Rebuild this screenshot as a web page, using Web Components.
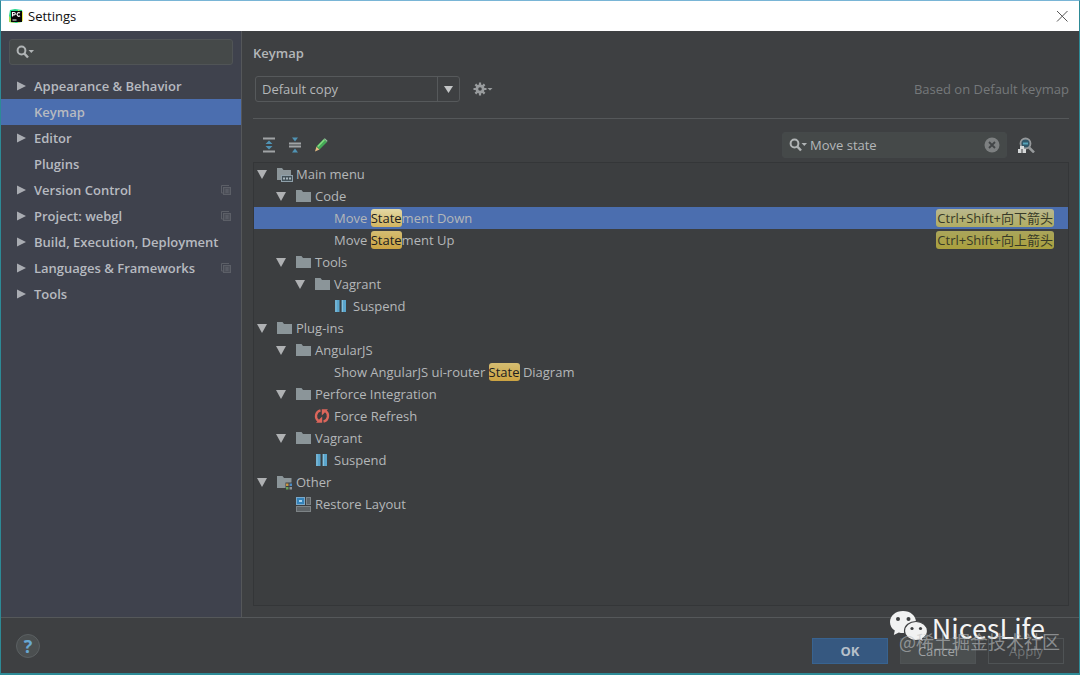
<!DOCTYPE html>
<html lang="en">
<head>
<meta charset="utf-8">
<title>Settings</title>
<style>
  html, body {
    margin: 0;
    height: 100%;
  }

  body {
    font-family: "Open Sans", "Noto Sans CJK SC", sans-serif;
    font-size: 13px;
    line-height: 22px;
    color: #b4b7b9;
    background: #3e4042;
  }
</style>
</head>
<body>
<settings-dialog>
  <title-bar slot="title">Settings</title-bar>

  <settings-nav slot="nav">
    <nav-item expandable>Appearance &amp; Behavior</nav-item>
    <nav-item selected>Keymap</nav-item>
    <nav-item expandable>Editor</nav-item>
    <nav-item>Plugins</nav-item>
    <nav-item expandable project>Version Control</nav-item>
    <nav-item expandable project>Project: webgl</nav-item>
    <nav-item expandable>Build, Execution, Deployment</nav-item>
    <nav-item expandable project>Languages &amp; Frameworks</nav-item>
    <nav-item expandable>Tools</nav-item>
  </settings-nav>

  <keymap-panel>
    <tree-row level="0" open icon="menu">Main menu</tree-row>
    <tree-row level="1" open icon="folder">Code</tree-row>
    <tree-row level="2" selected shortcut="Ctrl+Shift+向下箭头" match="State">Move Statement Down</tree-row>
    <tree-row level="2" shortcut="Ctrl+Shift+向上箭头" match="State">Move Statement Up</tree-row>
    <tree-row level="1" open icon="folder">Tools</tree-row>
    <tree-row level="2" open icon="folder">Vagrant</tree-row>
    <tree-row level="3" icon="pause">Suspend</tree-row>
    <tree-row level="0" open icon="folder">Plug-ins</tree-row>
    <tree-row level="1" open icon="folder">AngularJS</tree-row>
    <tree-row level="2" match="State">Show AngularJS ui-router State Diagram</tree-row>
    <tree-row level="1" open icon="folder">Perforce Integration</tree-row>
    <tree-row level="2" icon="refresh">Force Refresh</tree-row>
    <tree-row level="1" open icon="folder">Vagrant</tree-row>
    <tree-row level="2" icon="pause">Suspend</tree-row>
    <tree-row level="0" open icon="other">Other</tree-row>
    <tree-row level="1" icon="layout">Restore Layout</tree-row>
  </keymap-panel>

  <dialog-footer slot="footer"></dialog-footer>
  <page-watermark slot="watermark"></page-watermark>
</settings-dialog>

<script>
  const icons = {
    logo: `<path d="M2 2l5-1 7 1 1 6-1 6-6 1-6-1-1-6z" fill="#21d789"/><path d="M10 2l5 2v9l-5 2z" fill="#e9ed4c"/><path d="M1 8v6l6 1z" fill="#a5dc4f"/><rect x="3" y="3" width="11" height="11" fill="#070707"/><path d="M4.500 8.500V4.500h1.600a1.200 1.200 0 0 1 0 2.400H4.500M12 5a1.800 1.800 0 1 0 0 2.800" fill="none" stroke="#fff" stroke-width="1.200"/><path d="M4.500 12h4" stroke="#fff"/>`,
    close: `<path d="M3 3l10.500 10.500M13.500 3L3 13.500" stroke="#555" stroke-width="1"/>`,
    right: `<path d="M4 3.500v9l9-4.500z" fill="#a9acb2"/>`,
    down: `<path d="M3 4h10l-5 9z" fill="#afb1b3"/>`,
    caret: `<path d="M2 3h9l-4.500 7z" fill="#c3c5c6"/>`,
    search: `<circle cx="5.500" cy="6.500" r="3.900" fill="none" stroke="#b0b4b5" stroke-width="2"/><path d="M8.300 9.500l3.700 4" stroke="#b0b4b5" stroke-width="2.500"/><path d="M12.500 6H18l-2.700 3z" fill="#b0b4b5"/>`,
    project: `<path d="M3.500 11V3.500H11M3.500 11h2" fill="none" stroke="#5c5f67"/><rect x="5.500" y="5.500" width="7" height="7" fill="#4c4f58" stroke="#5c5f67"/><path d="M7.500 8h3M7.500 10h3" stroke="#646870"/>`,
    gear: `<path d="M8 1.500v13M1.500 8h13M3.400 3.400l9.200 9.200M12.600 3.400l-9.200 9.200" stroke="#999c9e" stroke-width="2.200"/><circle cx="8" cy="8" r="4.500" fill="#999c9e"/><circle cx="8" cy="8" r="1.800" fill="#3e4042"/><path d="M15.500 7h5l-2.500 2.500z" fill="#999c9e"/>`,
    expand: `<path d="M2 1.500h12M2 14.500h12" stroke="#a0a3a5" stroke-width="2"/><path d="M4.500 7L8 3.500 11.500 7zM4.500 9L8 12.500 11.500 9z" fill="#5093b4"/>`,
    collapse: `<path d="M2 6.500h12M2 9.500h12" stroke="#a0a3a5" stroke-width="2"/><path d="M5 .5h6L8 4.500zM5 15.500h6L8 11.500z" fill="#5093b4"/>`,
    edit: `<path d="M2 14.500l1.500-5L6.500 12.500z" fill="#e5bc83"/><path d="M3.500 9.500L10.800 2l3.200 3-7.500 7.500z" fill="#45a957"/><path d="M4.800 9.500l6.500-6.700" stroke="#85dc80" stroke-width="1.500"/><path d="M10.800 2l1-.7 2.700 2.500-.5 1.200z" fill="#93c39b"/>`,
    clear: `<circle cx="8" cy="8" r="7.500" fill="#7d8081"/><path d="M5 5l6 6M11 5l-6 6" stroke="#424547" stroke-width="1.800"/>`,
    shortcut: `<circle cx="8.500" cy="6.500" r="5" fill="#315668" stroke="#96999b" stroke-width="1.800"/><path d="M6 6.500h5" stroke="#55a3b9" stroke-width="2"/><path d="M12 10.500l5 5" stroke="#96999b" stroke-width="2.500"/><path d="M3 9h4v3h2v4H1v-4h2z" fill="#d5d7d8"/><path d="M5 12v4" stroke="#3e4042"/>`,
    folder: `<path d="M1 2h5.500L8 4h8v10H1z" fill="#8b9599"/>`,
    menu: `<path d="M1 2h5l1.500 2H15v5H5v5H1z" fill="#8b9599"/><rect x="5.500" y="9.500" width="11" height="6" fill="#435158" stroke="#8fa0aa"/><path d="M7 12.500h2M10 12.500h2M13 12.500h2" stroke="#a8b6bd" stroke-width="2"/>`,
    other: `<path d="M1 2h5.500L8 4h7.500v4.500h-6V14H1z" fill="#8b9599"/><path d="M10 9.500h2.500V12H10z" fill="#c99444"/><path d="M13.500 9.500H16V12h-2.500z" fill="#4b8ac3"/><path d="M10 13h2.500v2.500H10z" fill="#67a15b"/><path d="M13.500 13H16v2.500h-2.500z" fill="#8f9397"/>`,
    pause: `<path d="M2 2h4.500v12H2zM8.500 2H13v12H8.500z" fill="#5aa5cc"/><path d="M3 2v12M9.500 2v12" stroke="#8ac0da"/>`,
    refresh: `<path d="M6.500 2.300A6 6 0 0 0 4.500 13M9.500 13.700A6 6 0 0 0 11.500 3" fill="none" stroke="#dc665b" stroke-width="2.300"/><path d="M2 14.800h6.200V8.500zM14 1.200H7.800v6.300z" fill="#dc665b"/>`,
    layout: `<rect x="1.500" y="1.500" width="8" height="7" fill="#3482b9" stroke="#7aa8c9"/><path d="M4 4h3v2H4z" fill="#a6d2ed"/><rect x="11.500" y="1.500" width="4" height="7" fill="#5f6467" stroke="#7d8386"/><rect x="1.500" y="10.500" width="14" height="5" fill="#5f6467" stroke="#7d8386"/>`,
    wechat: `<path d="M14 1C6.500 1 1 5.800 1 12c0 3.600 1.800 6.600 4.800 8.500L4.800 25l5-2.600c1.500.4 2.700.5 4.200.5 7.500 0 13-4.800 13-10.900S21.500 1 14 1z" fill="#f1f2f2"/><path d="M27 11.500c-6.500 0-11.500 4.200-11.500 9.500s5 9.500 11.500 9.500c1.300 0 2.500-.2 3.500-.5l4.200 2.300-1-3.800c3-1.700 4.800-4.400 4.800-7.500 0-5.300-5-9.500-11.500-9.500z" fill="#f1f2f2" stroke="#3e4042" stroke-width="1.200"/><g fill="#3e4042"><circle cx="9" cy="9" r="2"/><circle cx="19.500" cy="9" r="2"/><circle cx="23" cy="18.500" r="1.600"/><circle cx="31.500" cy="18.500" r="1.600"/></g>`
  };

  class SvgIcon extends HTMLElement {
    constructor() {
      super();
      this.attachShadow({ mode: 'open' });
    }

    connectedCallback() {
      const width = this.getAttribute('width') || 16;
      const height = this.getAttribute('height') || 16;
      this.shadowRoot.innerHTML = `
        <style>
          :host { display: block; flex: none; }
          svg { display: block; }
        </style>
        <svg width="${width}" height="${height}" viewBox="0 0 ${width} ${height}" aria-hidden="true">${icons[this.getAttribute('name')] || ''}</svg>
      `;
    }
  }

  class SettingsDialog extends HTMLElement {
    constructor() {
      super();
      this.attachShadow({ mode: 'open' });
      this.shadowRoot.innerHTML = `
        <style>
          :host {
            display: flex;
            flex-direction: column;
            position: relative;
            box-sizing: border-box;
            min-height: 100vh;
            border: 1px solid #2d8a96;
            border-top-color: #79b5d6;
            border-bottom-width: 2px;
          }

          #body {
            flex: 1;
            display: grid;
            grid-template-columns: 241px 1fr;
          }
        </style>
        <slot name="title"></slot>
        <div id="body">
          <slot name="nav"></slot>
          <slot></slot>
        </div>
        <slot name="footer"></slot>
        <slot name="watermark"></slot>
      `;
    }
  }

  class TitleBar extends HTMLElement {
    constructor() {
      super();
      this.attachShadow({ mode: 'open' });
      this.shadowRoot.innerHTML = `
        <style>
          :host {
            display: flex;
            align-items: center;
            gap: 4px;
            height: 30px;
            padding: 0 9px 0 7px;
            background: #fff;
            color: #111;
          }

          #title { flex: 1; }

          button {
            padding: 0;
            border: 0;
            background: none;
          }
        </style>
        <svg-icon name="logo"></svg-icon>
        <span id="title"><slot></slot></span>
        <button aria-label="Close"><svg-icon name="close"></svg-icon></button>
      `;
    }
  }

  class SearchField extends HTMLElement {
    constructor() {
      super();
      this.attachShadow({ mode: 'open' });
    }

    connectedCallback() {
      const value = this.getAttribute('value') || '';
      this.shadowRoot.innerHTML = `
        <style>
          :host {
            display: flex;
            align-items: center;
            box-sizing: border-box;
            height: 26px;
            padding: 0 6px;
            border: 1px solid #505456;
            border-radius: 3px;
            background: #454949;
          }

          input {
            flex: 1;
            min-width: 0;
            padding: 0 2px;
            border: 0;
            outline: 0;
            background: none;
            font: inherit;
            color: #b4b7b9;
          }

          button {
            padding: 0;
            border: 0;
            background: none;
          }
        </style>
        <svg-icon name="search" width="19"></svg-icon>
        <input type="text" aria-label="${this.getAttribute('label')}" value="${value}">
        ${value ? '<button aria-label="Clear"><svg-icon name="clear"></svg-icon></button>' : ''}
      `;
    }
  }

  class SettingsNav extends HTMLElement {
    constructor() {
      super();
      this.attachShadow({ mode: 'open' });
      this.shadowRoot.innerHTML = `
        <style>
          :host {
            display: block;
            border-right: 1px solid #55575a;
            background: #3f424d;
          }

          search-field { margin: 8px; }
        </style>
        <search-field label="Search settings"></search-field>
        <nav><slot></slot></nav>
      `;
    }
  }

  class NavItem extends HTMLElement {
    constructor() {
      super();
      this.attachShadow({ mode: 'open' });
    }

    connectedCallback() {
      this.shadowRoot.innerHTML = `
        <style>
          :host { display: block; }

          a {
            display: flex;
            align-items: center;
            gap: 5px;
            height: 26px;
            padding: 0 7px 0 12px;
            color: #b7bac0;
            font-weight: 600;
            text-decoration: none;
            white-space: nowrap;
          }

          :host([selected]) a { background: #4b6eaf; }

          #label { flex: 1; }
        </style>
        <a href="#">
          <svg-icon name="${this.hasAttribute('expandable') ? 'right' : ''}"></svg-icon>
          <span id="label"><slot></slot></span>
          ${this.hasAttribute('project') ? '<svg-icon name="project"></svg-icon>' : ''}
        </a>
      `;
    }
  }

  class KeymapPanel extends HTMLElement {
    constructor() {
      super();
      this.attachShadow({ mode: 'open' });
      this.shadowRoot.innerHTML = `
        <style>
          :host {
            display: flex;
            flex-direction: column;
            padding: 11px 10px 11px 11px;
          }

          h1 {
            margin: 0;
            font-size: 13px;
            font-weight: 600;
            line-height: 22px;
          }

          .bar {
            display: flex;
            align-items: center;
          }

          #scheme {
            gap: 12px;
            padding: 12px 0 16px 2px;
            border-bottom: 1px solid #55585a;
          }

          #combo {
            display: grid;
            grid-template-columns: 181px 22px;
            height: 26px;
            box-sizing: border-box;
            border: 1px solid #56595b;
            border-radius: 3px;
          }

          #combo select {
            grid-area: 1 / 1 / 2 / 3;
            appearance: none;
            padding: 0 6px;
            border: 0;
            background: none;
            font: inherit;
            color: inherit;
          }

          #combo span {
            grid-area: 1 / 2;
            display: grid;
            place-items: center;
            border-left: 1px solid #56595b;
            pointer-events: none;
          }

          #based {
            margin-left: auto;
            color: #75787a;
          }

          button {
            padding: 0;
            border: 0;
            background: none;
          }

          #tools {
            gap: 10px;
            padding: 13px 34px 4px 8px;
          }

          #tools search-field {
            width: 225px;
            margin-left: auto;
            border-color: #45494a;
          }

          #tree {
            flex: 1;
            border: 1px solid #343638;
            background: #3c3e40;
          }
        </style>
        <h1>Keymap</h1>
        <div id="scheme" class="bar">
          <div id="combo">
            <select aria-label="Keymap scheme"><option>Default copy</option></select>
            <span><svg-icon name="caret" width="13" height="13"></svg-icon></span>
          </div>
          <button aria-label="Scheme actions"><svg-icon name="gear" width="22"></svg-icon></button>
          <span id="based">Based on Default keymap</span>
        </div>
        <div id="tools" class="bar">
          <button aria-label="Expand all"><svg-icon name="expand"></svg-icon></button>
          <button aria-label="Collapse all"><svg-icon name="collapse"></svg-icon></button>
          <button aria-label="Edit shortcut"><svg-icon name="edit"></svg-icon></button>
          <search-field label="Search actions" value="Move state"></search-field>
          <button aria-label="Find by shortcut"><svg-icon name="shortcut" width="18"></svg-icon></button>
        </div>
        <div id="tree" role="tree"><slot></slot></div>
      `;
    }
  }

  class TreeRow extends HTMLElement {
    constructor() {
      super();
      this.attachShadow({ mode: 'open' });
    }

    connectedCallback() {
      const level = Number(this.getAttribute('level'));
      const match = this.getAttribute('match');
      const shortcut = this.getAttribute('shortcut');
      const text = this.textContent;
      this.setAttribute('role', 'treeitem');
      this.setAttribute('aria-level', level + 1);

      // Rows with a search hit render their own text, so the hit can be marked
      const label = match ? text.replace(match, `<mark>${match}</mark>`) : '<slot></slot>';

      this.shadowRoot.innerHTML = `
        <style>
          :host {
            display: flex;
            align-items: center;
            height: 22px;
            padding: 0 14px 0 ${level * 19}px;
          }

          :host([selected]) { background: #4b6eaf; }

          #icon { margin: 0 3px 0 6px; }

          #label {
            flex: 1;
            white-space: nowrap;
          }

          mark, kbd {
            border-radius: 3px;
            line-height: 18px;
            color: #202020;
          }

          mark {
            display: inline-block;
            background: linear-gradient(#d4bd72, #cba342);
          }

          :host([selected]) mark { background: linear-gradient(#e3d8a4, #d3b55f); }

          kbd {
            padding: 0 1px;
            font: inherit;
            line-height: 18px;
            color: #383a28;
            background: linear-gradient(#aaa55b, #aaa03d);
          }

          :host([selected]) kbd { background: linear-gradient(#b9b78e, #b1ad62); }
        </style>
        <svg-icon name="${this.hasAttribute('open') ? 'down' : ''}"></svg-icon>
        <svg-icon id="icon" name="${this.getAttribute('icon') || ''}" width="17"></svg-icon>
        <span id="label">${label}</span>
        ${shortcut ? `<kbd>${shortcut}</kbd>` : ''}
      `;
    }
  }

  class DialogFooter extends HTMLElement {
    constructor() {
      super();
      this.attachShadow({ mode: 'open' });
      this.shadowRoot.innerHTML = `
        <style>
          :host {
            display: flex;
            align-items: flex-end;
            gap: 12px;
            padding: 16px 15px 9px 15px;
            border-top: 1px solid #55585a;
          }

          button {
            box-sizing: border-box;
            width: 76px;
            height: 26px;
            padding: 0;
            border: 1px solid #4f5355;
            background: #4b4f50;
            font: inherit;
            color: #9fa2a4;
          }

          #help {
            width: 24px;
            height: 24px;
            margin: 0 auto 6px 0;
            border-color: #5b6062;
            border-radius: 50%;
            font-size: 18px;
            line-height: 22px;
            font-weight: bold;
            color: #68a8d2;
          }

          #ok {
            border-color: #386390;
            background: #365880;
            font-weight: bold;
            color: #b7c0ca;
          }

          #apply {
            background: none;
            color: #727577;
          }
        </style>
        <button id="help" aria-label="Help">?</button>
        <button id="ok">OK</button>
        <button>Cancel</button>
        <button id="apply" disabled>Apply</button>
      `;
    }
  }

  class PageWatermark extends HTMLElement {
    constructor() {
      super();
      this.attachShadow({ mode: 'open' });
      this.shadowRoot.innerHTML = `
        <style>
          :host {
            position: absolute;
            right: 19px;
            bottom: 20px;
            display: grid;
            font-family: "Noto Sans CJK SC", sans-serif;
            pointer-events: none;
          }

          #brand {
            grid-area: 1 / 1;
            display: flex;
            gap: 4px;
            align-self: start;
            margin-right: 15px;
            font-size: 27px;
            line-height: 36px;
            color: #f4f4f4;
          }

          #site {
            grid-area: 1 / 1;
            justify-self: end;
            padding-top: 19px;
            font-size: 18px;
            line-height: 24px;
            color: rgba(190, 193, 195, 0.6);
          }
        </style>
        <div id="brand"><svg-icon name="wechat" width="39" height="34"></svg-icon>NicesLife</div>
        <div id="site">@稀土掘金技术社区</div>
      `;
    }
  }

  customElements.define('svg-icon', SvgIcon);
  customElements.define('search-field', SearchField);
  customElements.define('settings-dialog', SettingsDialog);
  customElements.define('title-bar', TitleBar);
  customElements.define('settings-nav', SettingsNav);
  customElements.define('nav-item', NavItem);
  customElements.define('keymap-panel', KeymapPanel);
  customElements.define('tree-row', TreeRow);
  customElements.define('dialog-footer', DialogFooter);
  customElements.define('page-watermark', PageWatermark);
</script>
</body>
</html>
